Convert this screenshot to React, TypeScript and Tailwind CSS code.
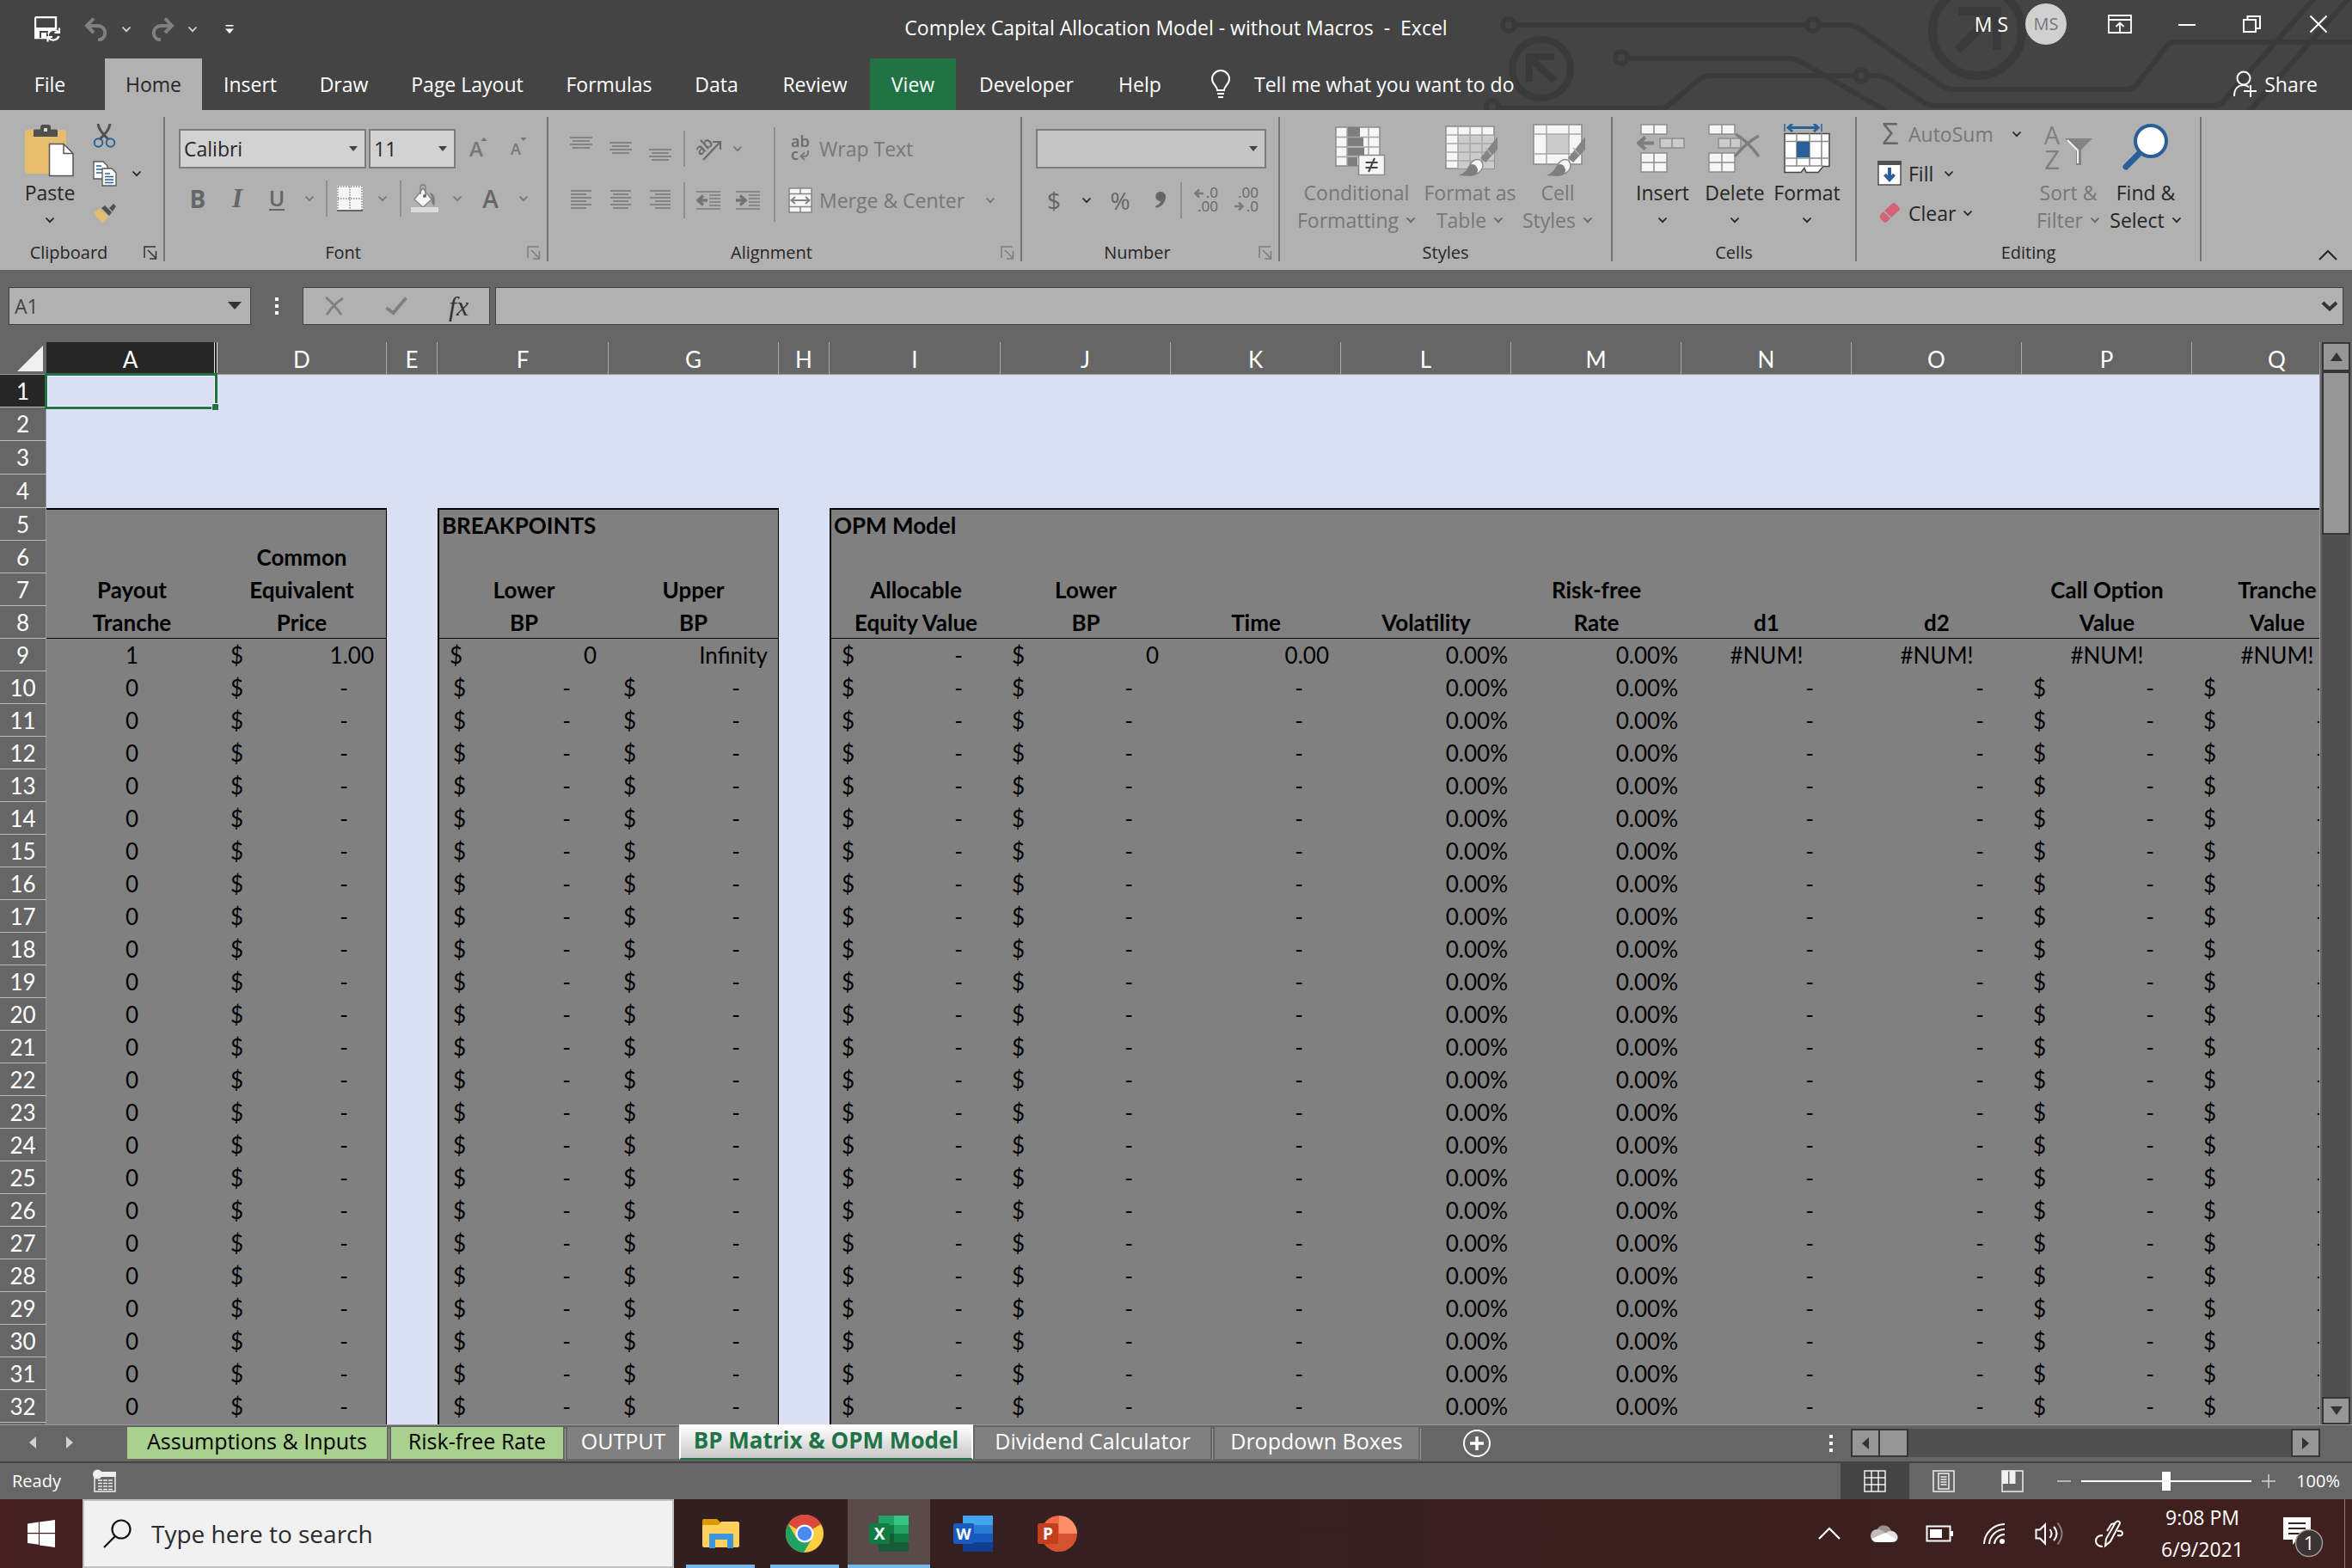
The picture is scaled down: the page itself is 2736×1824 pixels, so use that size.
import React from "react";

type Kids = { children?: React.ReactNode };

/* ---------- small shared pieces ---------- */

function Chev({ className = "text-[#262626]" }: { className?: string }) {
  return (
    <svg width="12" height="8" viewBox="0 0 12 8" className={`shrink-0 ${className}`} aria-hidden="true">
      <path d="M1.5 1.5L6 6.2l4.5-4.7" fill="none" stroke="currentColor" strokeWidth="1.8" />
    </svg>
  );
}

function Tri({ className = "" }: { className?: string }) {
  return (
    <svg width="10" height="6" viewBox="0 0 10 6" className={className} aria-hidden="true">
      <path d="M0 0h10L5 6z" fill="currentColor" />
    </svg>
  );
}

function Slot({ w, label, children }: Kids & { w: string; label: string }) {
  return (
    <button type="button" aria-label={label} className={`flex h-[42px] shrink-0 items-center justify-center ${w}`}>
      {children}
    </button>
  );
}

function Sep({ className = "h-[42px]" }: { className?: string }) {
  return <span className={`w-[2px] shrink-0 bg-[#8f8f8f] ${className}`} />;
}

function Group({ name, launcher, w, children }: Kids & { name: string; launcher?: "on" | "off"; w: string }) {
  return (
    <section aria-label={name} className={`flex shrink-0 flex-col border-r-2 border-[#757575] ${w}`}>
      <div className="flex-1">{children}</div>
      <div className="flex h-5 items-center">
        <span className="flex-1 text-center text-[20px] leading-5 text-[#262626]">{name}</span>
        {launcher && (
          <button type="button" aria-label={`${name} settings`} className="flex w-[30px] justify-center">
            <svg
              width="16"
              height="16"
              viewBox="0 0 16 16"
              fill="none"
              stroke="currentColor"
              strokeWidth="1.5"
              className={launcher === "on" ? "text-[#333]" : "text-[#7d7d7d]"}
            >
              <path d="M1 14V1h13M5 5l9 9M14.500 6v9H7" />
            </svg>
          </button>
        )}
      </div>
    </section>
  );
}

function BigButton({
  icon,
  top,
  bottom,
  dim,
  w,
}: {
  icon: React.ReactNode;
  top: string;
  bottom?: string;
  dim?: boolean;
  w: string;
}) {
  return (
    <button
      type="button"
      className={`flex shrink-0 flex-col items-center text-[23px] leading-8 whitespace-nowrap ${w} ${dim ? "text-[#777]" : "text-[#262626]"}`}
    >
      <span className="flex h-16 items-start justify-center">{icon}</span>
      <span>{top}</span>
      <span className="flex h-8 items-center gap-2">
        {bottom && <span>{bottom}</span>}
        <Chev className={dim ? "text-[#666]" : "text-[#262626]"} />
      </span>
    </button>
  );
}

function Combo({ label, value, w, bg }: { label: string; value: string; w: string; bg: string }) {
  return (
    <span className={`relative block shrink-0 ${w}`}>
      <select
        aria-label={label}
        defaultValue={value}
        className={`h-[46px] w-full appearance-none rounded-none border-2 border-[#7c7c7c] pl-1 text-[23px] text-[#262626] ${bg}`}
      >
        <option>{value}</option>
      </select>
      <Tri className="pointer-events-none absolute top-5 right-2.5 text-[#444]" />
    </span>
  );
}

function Lines({ rows, w = 26 }: { rows: [number, number, number][]; w?: number }) {
  return (
    <svg width={w} height="28" viewBox={`0 0 ${w} 28`} stroke="#7b7b7b" strokeWidth="1.6" aria-hidden="true">
      {rows.map(([y, a, b]) => (
        <path key={y} d={`M${a} ${y}H${b}`} />
      ))}
    </svg>
  );
}

/* ---------- title bar ---------- */

function Circuit() {
  return (
    <svg
      className="pointer-events-none absolute top-0 right-0"
      width="1036"
      height="128"
      viewBox="1700 0 1036 128"
      fill="none"
      stroke="#3a3a3a"
      strokeWidth="6"
      aria-hidden="true"
    >
      <circle cx="1755" cy="29" r="7" />
      <path d="M1764 29H2100M2118 29H2150C2158 29 2164 34 2170 38L2256 98Q2264 104 2274 104H2472Q2482 104 2486 98L2520 54Q2524 49 2532 49H2736" />
      <circle cx="2109" cy="29" r="7" />
      <circle cx="1886" cy="67" r="7" />
      <path d="M1895 68H2080Q2090 68 2104 77L2194 129" />
      <circle cx="1736" cy="124" r="7" />
      <path d="M1745 126H1930Q1938 126 1944 120L1972 96Q1980 88 1990 88H2156" />
      <circle cx="2165" cy="88" r="7" />
      <path d="M2174 88H2182Q2192 88 2202 95L2236 118Q2242 123 2252 123H2574Q2584 123 2588 116L2694 -4" />
      <path d="M2616 130L2734 -4" />
      <circle cx="1793" cy="80" r="34" strokeWidth="8" />
      <path d="M1808 66H1779V95M1780 67L1808 94" strokeWidth="8" />
      <circle cx="2300" cy="36" r="52" strokeWidth="10" />
      <path d="M2278 13H2323V58M2322 14L2277 58" strokeWidth="10" />
    </svg>
  );
}

function TitleBar() {
  return (
    <div className="relative flex h-[68px] items-center justify-between text-white">
      <div className="flex items-center">
        <button type="button" aria-label="Save" className="ml-10 flex w-[34px]">
          <svg width="32" height="30" viewBox="0 0 32 30" fill="none">
            <path d="M1 1h24v14M1 1v24h14" stroke="#fff" strokeWidth="2.400" />
            <path d="M1 13h24v4h-8v9H1z" fill="#fff" />
            <path d="M7 25v-7h8v7" stroke="#444" strokeWidth="2" />
            <path d="M16 20.500a7 7 0 0 1 12-2M29 13.500v5.500h-5.500M28.500 23a7 7 0 0 1-12 2M15.500 29.500v-5.500H21" stroke="#fff" strokeWidth="2.200" />
          </svg>
        </button>
        <button type="button" aria-label="Undo" className="ml-6 flex">
          <svg width="28" height="28" viewBox="0 0 28 28" fill="none" stroke="#808080" strokeWidth="4">
            <path d="M3 10h13a8 8 0 0 1 0 16.500M11 1.500L3 10l8 8" />
          </svg>
        </button>
        <button type="button" aria-label="Undo list" className="ml-[15px] flex">
          <Chev className="text-[#d5d5d5]" />
        </button>
        <button type="button" aria-label="Redo" className="ml-[22px] flex">
          <svg width="28" height="28" viewBox="0 0 28 28" fill="none" stroke="#808080" strokeWidth="4">
            <path d="M25 10H12a8 8 0 0 0 0 16.500M17 1.500L25 10l-8 8" />
          </svg>
        </button>
        <button type="button" aria-label="Redo list" className="ml-[15px] flex">
          <Chev className="text-[#d5d5d5]" />
        </button>
        <button type="button" aria-label="Customize toolbar" className="ml-8 flex">
          <svg width="10" height="12" viewBox="0 0 10 12" fill="#fff">
            <path d="M0.500 1h9v1.600h-9zM0 5.500h10L5 11z" />
          </svg>
        </button>
      </div>
      <h1 className="absolute left-1/2 -translate-x-1/2 pb-1 text-[23px] leading-8 font-normal whitespace-pre">
        {"Complex Capital Allocation Model - without Macros  -  Excel"}
      </h1>
      <div className="flex items-center pb-3">
        <span className="text-[23px] leading-8">M S</span>
        <span className="ml-5 flex size-12 items-center justify-center rounded-full bg-[#d0d0d0] text-[20px] text-[#777]">
          MS
        </span>
        <button type="button" aria-label="Ribbon display options" className="ml-12 flex">
          <svg width="28" height="22" viewBox="0 0 28 22" fill="none" stroke="#fff" strokeWidth="1.800">
            <path d="M1 1h26v20H1zM1 6h26M14 20V10M9.500 14L14 9.500l4.500 4.500" />
          </svg>
        </button>
        <button type="button" aria-label="Minimize" className="ml-[53px] flex">
          <svg width="22" height="20" viewBox="0 0 22 20" stroke="#fff" strokeWidth="2">
            <path d="M1 11h20" />
          </svg>
        </button>
        <button type="button" aria-label="Restore" className="ml-[54px] flex">
          <svg width="22" height="22" viewBox="0 0 22 22" fill="none" stroke="#fff" strokeWidth="2">
            <path d="M1 6h14v14H1zM5.500 6V2H20v14h-5" />
          </svg>
        </button>
        <button type="button" aria-label="Close" className="mr-7 ml-[55px] flex">
          <svg width="22" height="22" viewBox="0 0 22 22" fill="none" stroke="#fff" strokeWidth="2">
            <path d="M1.500 1.500l19 19M20.500 1.500l-19 19" />
          </svg>
        </button>
      </div>
    </div>
  );
}

const tabs: [string, string][] = [
  ["File", "w-[122px] pr-1.5"],
  ["Home", "w-[113px] bg-[#b1b1b1] text-[#262626]"],
  ["Insert", "w-[112px]"],
  ["Draw", "w-[106px]"],
  ["Page Layout", "w-[181px]"],
  ["Formulas", "w-[149px]"],
  ["Data", "w-[101px]"],
  ["Review", "w-[128px]"],
  ["View", "w-[100px] bg-[#217346]"],
  ["Developer", "w-[164px]"],
  ["Help", "w-[100px]"],
];

function TabBar() {
  return (
    <nav className="relative flex h-[60px] items-stretch text-[23px] text-white">
      {tabs.map(([t, c]) => (
        <button key={t} type="button" className={`shrink-0 whitespace-nowrap ${c}`}>
          {t}
        </button>
      ))}
      <button type="button" className="ml-8 flex items-center gap-[27px] whitespace-nowrap">
        <svg width="24" height="34" viewBox="0 0 24 34" fill="none" stroke="#fff" strokeWidth="2">
          <path d="M8 24c0-5-6-7-6-13a10 10 0 0 1 20 0c0 6-6 8-6 13zM8 28h8M9 32h6" />
        </svg>
        Tell me what you want to do
      </button>
      <button type="button" className="mr-10 ml-auto flex items-center gap-2">
        <svg width="28" height="32" viewBox="0 0 28 32" fill="none" stroke="#fff" strokeWidth="2">
          <circle cx="12" cy="9" r="7.500" />
          <path d="M1 30c0-8 4-13 11-13 3 0 4.500 1 6 2.500M20 17v14M12 24h15" />
        </svg>
        Share
      </button>
    </nav>
  );
}

/* ---------- ribbon icons ---------- */

const PasteIcon = (
  <svg width="58" height="62" viewBox="0 0 58 62">
    <rect x="0" y="7" width="48" height="51" rx="3" fill="#e6bd6c" />
    <path d="M10 15V8q0-1.500 2-1.500h6V4q0-3 3-3h6q3 0 3 3v2.500h6q2 0 2 1.500v7z" fill="#4f4f4f" />
    <rect x="22" y="5" width="4" height="4" fill="#d8d8d8" />
    <path d="M28.500 23.500H45l11 11v26H28.500z" fill="#fff" stroke="#555" strokeWidth="1.500" />
    <path d="M45 23.500v11h11" fill="none" stroke="#555" strokeWidth="1.500" />
  </svg>
);

const CondIcon = (
  <svg width="68" height="60" viewBox="-9 0 68 60">
    <path d="M1 4h51v45H1z" fill="#f6f6f6" stroke="#8a8a8a" strokeWidth="1.500" />
    <path d="M14 4h15v11H14zM14 16h19v10H14zM14 27.500h20v10H14zM14 39h12v10H14z" fill="#7e7e7e" />
    <path d="M1 15.500h51M1 27h51M1 38.500h51M14 4v45M39 4v45" stroke="#a5a5a5" strokeWidth="1.500" />
    <path d="M27.500 36.500h30v23h-30z" fill="#f6f6f6" stroke="#888" strokeWidth="1.500" />
    <path d="M35.500 45h14M35.500 51h14M46 40l-7 16" stroke="#444" strokeWidth="2" />
  </svg>
);

function Brush() {
  return (
    <>
      <path d="M61 15v15L47 45l-6-5z" fill="#848484" />
      <path d="M47 28l7 8" stroke="#b1b1b1" strokeWidth="1.500" />
      <path d="M30 46q6-7 12-3 5 7-2 13-6 5-13 3z" fill="#f6f6f6" stroke="#8a8a8a" strokeWidth="1.500" />
      <path d="M16 60q8-3 11-10 3-5 8-2 5 5 2 9-2 4-9 4z" fill="#7e7e7e" />
    </>
  );
}

const TableFmtIcon = (
  <svg width="66" height="62" viewBox="-4 0 66 62">
    <path d="M1 3h56v49H1z" fill="#f6f6f6" stroke="#8a8a8a" strokeWidth="1.500" />
    <path d="M15 13h42v39H15z" fill="#cbcbcb" />
    <path d="M1 13h56M1 23h56M1 33h56M1 43h56M15 3v49M29 3v49M43 3v49" stroke="#a8a8a8" strokeWidth="1.500" />
    <Brush />
  </svg>
);

const CellStyleIcon = (
  <svg width="66" height="62" viewBox="-4 0 66 62">
    <path d="M1 1h56v46H1z" fill="#f6f6f6" stroke="#8a8a8a" strokeWidth="1.500" />
    <path d="M16 12h26v23H16z" fill="#cbcbcb" />
    <path d="M1 12h56M1 35h56M16 1v46M42 1v46" stroke="#a8a8a8" strokeWidth="1.500" />
    <Brush />
  </svg>
);

const InsertIcon = (
  <svg width="60" height="58" viewBox="0 0 60 58" fill="#f6f6f6" stroke="#8d8d8d" strokeWidth="1.500">
    <path d="M5 1h30v11H5zM20 1v11M5 34h30v22H5zM5 45h30M20 34v22" />
    <path d="M27 17h28v11H27zM41 17v11" fill="#cbcbcb" />
    <path d="M20 22.500H4M10 15.500l-8 7 8 7" fill="none" stroke="#7e7e7e" strokeWidth="4" />
  </svg>
);

const DeleteIcon = (
  <svg width="62" height="58" viewBox="0 0 62 58" fill="#f6f6f6" stroke="#8d8d8d" strokeWidth="1.500">
    <path d="M1 1h30v11H1zM16 1v11M1 34h30v22H1zM1 45h30M16 34v22" />
    <path d="M12 17h26v11H12zM26 17v11" fill="#cbcbcb" />
    <path d="M32 12q14 8 27 26M59 14Q44 22 31 38" fill="none" stroke="#7e7e7e" strokeWidth="3.500" />
  </svg>
);

const FormatIcon = (
  <svg width="54" height="58" viewBox="0 0 54 58" fill="none">
    <path d="M1 0v9M44 0v9" stroke="#2a6099" strokeWidth="1.500" />
    <path d="M5 4.500h35M10 0L5 4.500l5 4.500M35 0l5 4.500L35 9" stroke="#2a6099" strokeWidth="3" />
    <path d="M1 11.500h52v38H46l-6 7H26l-2-5-4 5H1z" fill="#fff" stroke="#444" strokeWidth="1.500" />
    <path d="M1 20.500h52M1 40h52M15 11v38M30 11v38M44 11v38M1 49h45" stroke="#8a8a8a" strokeWidth="1.500" />
    <path d="M15 21h15v18H15z" fill="#2a6099" />
  </svg>
);

const SortIcon = (
  <svg width="58" height="60" viewBox="0 0 58 60" fill="none" className="overflow-visible">
    <text x="10" y="24" fontSize="29" fill="#808080" textAnchor="middle">
      A
    </text>
    <text x="10" y="53" fontSize="31" fill="#808080" textAnchor="middle">
      Z
    </text>
    <path d="M25 17h32L44 30v18h-6V30z" fill="#848484" />
    <path d="M28 19l12 12v15" stroke="#f4f4f4" strokeWidth="2" />
  </svg>
);

const FindIcon = (
  <svg width="56" height="56" viewBox="0 0 56 56" fill="none" stroke="#2a6099">
    <path d="M22 33L5 50" strokeWidth="7" strokeLinecap="round" />
    <circle cx="34" cy="20" r="18" fill="#fff" strokeWidth="4" />
  </svg>
);

/* ---------- ribbon ---------- */

function Ribbon() {
  return (
    <div className="flex h-[186px] shrink-0 items-stretch overflow-hidden bg-[#b1b1b1] pt-2 pb-2.5 text-[#262626]">
      <Group name="Clipboard" launcher="on" w="w-[192px]">
        <div className="flex pt-2 pl-[26px]">
          <BigButton icon={PasteIcon} top="Paste" w="w-16" />
          <div className="ml-[18px] flex flex-col">
            <button type="button" aria-label="Cut" className="flex h-[30px]">
              <svg width="28" height="28" viewBox="0 0 28 28" fill="none">
                <path d="M6 0q1 8 12 18M20 0q-1 8-12 18" stroke="#505050" strokeWidth="3" />
                <circle cx="6.500" cy="22" r="4.800" stroke="#2a6099" strokeWidth="2" />
                <circle cx="20.500" cy="22" r="4.800" stroke="#2a6099" strokeWidth="2" />
              </svg>
            </button>
            <button type="button" aria-label="Copy" className="mt-3 flex h-8 items-center gap-[17px]">
              <svg width="28" height="30" viewBox="0 0 28 30" fill="#fff">
                <path d="M1 1h11l5 5v15H1z" stroke="#555" strokeWidth="1.300" />
                <path d="M4 6h6M4 10h7M4 14h7" stroke="#2a6099" strokeWidth="1.300" />
                <path d="M11 9h11l5 5v15H11z" stroke="#555" strokeWidth="1.300" />
                <path d="M14 15h6M14 18.500h10M14 22h10M14 25.500h10" stroke="#2a6099" strokeWidth="1.300" />
              </svg>
              <Chev />
            </button>
            <button type="button" aria-label="Format painter" className="mt-[18px] flex">
              <svg width="28" height="24" viewBox="0 0 28 24">
                <path d="M8 7l10 9-6 7q-7-4-11-12z" fill="#e6bd6c" />
                <path d="M10 6l4-3 8 8-3 4zM19 6l5-5 3 3-4 6z" fill="#505050" />
              </svg>
            </button>
          </div>
        </div>
      </Group>

      <Group name="Font" launcher="off" w="w-[446px]">
        <div className="flex items-center gap-[3px] pt-3.5 pl-4">
          <Combo label="Font name" value="Calibri" w="w-[218px]" bg="bg-[#d2d2d2]" />
          <Combo label="Font size" value="11" w="w-[101px]" bg="bg-[#d2d2d2]" />
          <Slot w="w-12" label="Grow font">
            <span className="flex items-start text-[24px] leading-7 font-semibold text-[#777]">
              A<Tri className="-ml-1 rotate-180 scale-75" />
            </span>
          </Slot>
          <Slot w="w-10" label="Shrink font">
            <span className="flex items-start text-[18px] leading-7 font-semibold text-[#777]">
              A<Tri className="-ml-0.5 scale-75" />
            </span>
          </Slot>
        </div>
        <div className="flex items-center pt-3.5 pl-[15px] text-[#666]">
          <Slot w="w-[46px]" label="Bold">
            <span className="text-[28px] font-bold">B</span>
          </Slot>
          <Slot w="w-[46px]" label="Italic">
            <span className="font-['Liberation_Serif',serif] text-[31px] font-bold italic">I</span>
          </Slot>
          <Slot w="w-[46px]" label="Underline">
            <span className="border-b-2 border-[#666] text-[25px] leading-[26px] font-semibold">U</span>
          </Slot>
          <Slot w="w-[30px]" label="Underline styles">
            <Chev className="text-[#777]" />
          </Slot>
          <Sep className="ml-1 h-[42px]" />
          <Slot w="w-[52px]" label="Borders">
            <svg width="30" height="30" viewBox="0 0 30 30">
              <path d="M0 0h30v30H0z" fill="#f6f6f6" />
              <path d="M1 1h28v28M1 1v28M15 1v28M1 15h28" fill="none" stroke="#888" strokeWidth="1.500" strokeDasharray="1.500 1.500" />
              <path d="M0 29h30" stroke="#666" strokeWidth="2" />
            </svg>
          </Slot>
          <Slot w="w-[24px]" label="Border styles">
            <Chev className="text-[#777]" />
          </Slot>
          <Sep className="ml-2 h-[42px]" />
          <Slot w="w-[53px]" label="Fill color">
            <svg width="32" height="34" viewBox="0 0 32 34" fill="none">
              <path d="M22 10q8 2 5 16-4-4-3-10z" fill="#7e7e7e" />
              <path d="M14 5l10 13-10 9L4 18z" fill="#f6f6f6" stroke="#8a8a8a" strokeWidth="1.500" />
              <path d="M11 12V3q0-2 3-2t3 3v10" stroke="#8a8a8a" strokeWidth="1.800" />
              <circle cx="16" cy="14" r="2" fill="#666" />
              <path d="M0 27h32v6H0z" fill="#dcdcdc" />
            </svg>
          </Slot>
          <Slot w="w-[24px]" label="Fill colors">
            <Chev className="text-[#777]" />
          </Slot>
          <Slot w="w-[53px]" label="Font color">
            <span className="text-[28px] font-semibold">A</span>
          </Slot>
          <Slot w="w-[24px]" label="Font colors">
            <Chev className="text-[#777]" />
          </Slot>
        </div>
      </Group>

      <Group name="Alignment" launcher="off" w="w-[551px]">
        <div className="flex pl-[15px]">
          <div>
            <div className="flex items-center pt-4">
              <Slot w="w-[46px]" label="Top align">
                <Lines rows={[[1, 0, 26], [5, 3, 23], [9, 0, 26], [13, 3, 23]]} />
              </Slot>
              <Slot w="w-[46px]" label="Middle align">
                <Lines rows={[[7, 0, 26], [11, 3, 23], [15, 0, 26], [19, 3, 23]]} />
              </Slot>
              <Slot w="w-[46px]" label="Bottom align">
                <Lines rows={[[15, 0, 26], [19, 3, 23], [23, 0, 26], [27, 3, 23]]} />
              </Slot>
              <Sep className="ml-1 h-[42px]" />
              <Slot w="w-[54px]" label="Orientation">
                <svg width="32" height="32" viewBox="0 0 32 32" fill="none" className="overflow-visible">
                  <text x="2" y="21" transform="rotate(-42 9 17)" fontSize="18" fontWeight="600" fill="#6a6a6a">
                    ab
                  </text>
                  <path d="M10 29L29 9M21 8h9v9" stroke="#6a6a6a" strokeWidth="2.200" />
                </svg>
              </Slot>
              <Slot w="w-[14px]" label="Orientation list">
                <Chev className="text-[#777]" />
              </Slot>
            </div>
            <div className="flex items-center pt-[18px]">
              <Slot w="w-[46px]" label="Align left">
                <Lines rows={[[3, 1, 25], [7, 1, 19], [11, 1, 25], [15, 1, 19], [19, 1, 25], [23, 1, 19]]} />
              </Slot>
              <Slot w="w-[46px]" label="Center">
                <Lines rows={[[3, 1, 25], [7, 4, 22], [11, 1, 25], [15, 4, 22], [19, 1, 25], [23, 4, 22]]} />
              </Slot>
              <Slot w="w-[46px]" label="Align right">
                <Lines rows={[[3, 1, 25], [7, 7, 25], [11, 1, 25], [15, 7, 25], [19, 1, 25], [23, 7, 25]]} />
              </Slot>
              <Sep className="ml-1 h-[42px]" />
              <Slot w="w-[54px]" label="Decrease indent">
                <svg width="28" height="22" viewBox="0 0 28 22" fill="none">
                  <path d="M0 1h28M15 5h13M15 9h13M15 13h13M15 17h13M0 21h28" stroke="#7b7b7b" strokeWidth="1.500" />
                  <path d="M13 11H3M8 5.500l-6 5.500 6 5.500" stroke="#747474" strokeWidth="3.500" />
                </svg>
              </Slot>
              <Slot w="w-[38px]" label="Increase indent">
                <svg width="28" height="22" viewBox="0 0 28 22" fill="none">
                  <path d="M0 1h28M15 5h13M15 9h13M15 13h13M15 17h13M0 21h28" stroke="#7b7b7b" strokeWidth="1.500" />
                  <path d="M0 11h10M5 5.500l6 5.500-6 5.500" stroke="#747474" strokeWidth="3.500" />
                </svg>
              </Slot>
            </div>
          </div>
          <Sep className="mt-3 ml-[11px] h-[110px]" />
          <div className="pl-[15px] text-[23px] text-[#777]">
            <button type="button" className="mt-4 flex h-[42px] items-center gap-2">
              <svg width="28" height="30" viewBox="0 0 28 30" fill="none" className="overflow-visible">
                <text x="3" y="13" fontSize="18" fontWeight="600" fill="#6a6a6a">
                  ab
                </text>
                <text x="3" y="28" fontSize="18" fontWeight="600" fill="#6a6a6a">
                  c
                </text>
                <path d="M23 17v3q0 4-6 4h-2M19 19.500L14.500 24l4.500 4" stroke="#7a7a7a" strokeWidth="2" />
              </svg>
              Wrap Text
            </button>
            <button type="button" className="mt-[18px] flex h-[42px] items-center gap-2 whitespace-nowrap">
              <svg width="28" height="30" viewBox="0 0 28 30" fill="#f6f6f6" stroke="#858585" strokeWidth="1.500">
                <path d="M1 1h26v28H1zM1 7.500h26M1 22.500h26M14 1v6M14 23v6" />
                <path d="M4 15h20M8 11l-4.500 4L8 19M20 11l4.500 4-4.500 4" fill="none" strokeWidth="2" />
              </svg>
              <span className="mr-4">Merge &amp; Center</span>
              <Chev className="text-[#777]" />
            </button>
          </div>
        </div>
      </Group>

      <Group name="Number" launcher="off" w="w-[300px]">
        <div className="pt-3.5 pl-4">
          <Combo label="Number format" value="" w="w-[268px]" bg="bg-[#c5c5c5]" />
        </div>
        <div className="flex items-center pt-4 pl-3.5 text-[#666]">
          <Slot w="w-[46px]" label="Accounting format">
            <span className="text-[28px]">$</span>
          </Slot>
          <Slot w="w-[30px]" label="Accounting formats">
            <Chev />
          </Slot>
          <Slot w="w-[48px]" label="Percent style">
            <span className="text-[28px]">%</span>
          </Slot>
          <Slot w="w-[46px]" label="Comma style">
            <svg width="14" height="20" viewBox="0 0 14 20">
              <path d="M6.500 0a6 6 0 0 1 6.500 7Q12 16 2 19l-1-2q6-3 6-6A5.500 5.500 0 0 1 6.500 0z" fill="#666" />
            </svg>
          </Slot>
          <Sep />
          <Slot w="w-[56px]" label="Increase decimal">
            <svg width="30" height="32" viewBox="0 0 30 32" fill="#666" className="overflow-visible">
              <text x="29" y="13" fontSize="17" textAnchor="end">.0</text>
              <text x="29" y="29" fontSize="17" textAnchor="end">.00</text>
              <path d="M12 8H3M7 3.500L2.500 8 7 12.500" fill="none" stroke="#7a7a7a" strokeWidth="2.600" />
            </svg>
          </Slot>
          <Slot w="w-[38px]" label="Decrease decimal">
            <svg width="30" height="32" viewBox="0 0 30 32" fill="#666" className="overflow-visible">
              <text x="29" y="13" fontSize="17" textAnchor="end">.00</text>
              <text x="29" y="29" fontSize="17" textAnchor="end">.0</text>
              <path d="M1 23h9M6 18.500l4.500 4.500L6 27.500" fill="none" stroke="#7a7a7a" strokeWidth="2.600" />
            </svg>
          </Slot>
        </div>
      </Group>

      <Group name="Styles" w="w-[387px]">
        <div className="flex pt-2 pl-4">
          <BigButton icon={CondIcon} top="Conditional" bottom="Formatting" dim w="w-[146px]" />
          <BigButton icon={TableFmtIcon} top="Format as" bottom="Table" dim w="w-[118px]" />
          <BigButton icon={CellStyleIcon} top="Cell" bottom="Styles" dim w="w-[86px]" />
        </div>
      </Group>

      <Group name="Cells" w="w-[284px]">
        <div className="flex pt-2 pl-4">
          <BigButton icon={InsertIcon} top="Insert" w="w-[84px]" />
          <BigButton icon={DeleteIcon} top="Delete" w="w-[84px]" />
          <BigButton icon={FormatIcon} top="Format" w="w-[84px]" />
        </div>
      </Group>

      <Group name="Editing" w="w-[401px]">
        <div className="flex pl-6">
          <div className="flex w-[180px] flex-col gap-3.5 pt-1 text-[23px] leading-8">
            <button type="button" className="flex h-8 items-center text-[#777]">
              <svg width="36" height="28" viewBox="0 0 36 28" className="overflow-visible">
                <text x="15" y="26" fontSize="34" textAnchor="middle" fill="#666">
                  Σ
                </text>
              </svg>
              AutoSum
              <span className="ml-auto pr-3">
                <Chev />
              </span>
            </button>
            <button type="button" className="flex h-8 items-center gap-2">
              <svg width="28" height="30" viewBox="0 0 28 30">
                <path d="M1 1h26v27H1z" fill="#fff" stroke="#505050" strokeWidth="1.500" />
                <path d="M0 0h28v5H0z" fill="#505050" />
                <path d="M14 8v15M8.500 16l5.500 6 5.500-6" fill="none" stroke="#2a6099" strokeWidth="4" />
              </svg>
              Fill
              <Chev className="ml-1 text-[#262626]" />
            </button>
            <button type="button" className="flex h-8 items-center gap-2">
              <svg width="28" height="24" viewBox="0 0 28 24">
                <path d="M17 1q2-2 4 0l4 4q2 2 0 4l-9 8-8-8z" fill="#d4637a" />
                <path d="M7 10l8 8-4 4q-2 2-4 0l-4-4q-1-2 1-5z" fill="#d4637a" />
              </svg>
              Clear
              <Chev />
            </button>
          </div>
          <span className="flex gap-1.5 pt-2">
            <BigButton icon={SortIcon} top="Sort &amp;" bottom="Filter" dim w="w-[84px]" />
            <BigButton icon={FindIcon} top="Find &amp;" bottom="Select" w="w-[84px]" />
          </span>
        </div>
      </Group>
      <button type="button" aria-label="Collapse the ribbon" className="mr-4 ml-auto flex self-end">
        <svg width="24" height="14" viewBox="0 0 24 14" fill="none" stroke="#262626" strokeWidth="2">
          <path d="M2 12L12 2l10 10" />
        </svg>
      </button>
    </div>
  );
}

/* ---------- formula bar ---------- */

function Dots() {
  return (
    <span className="flex flex-col gap-1">
      <i className="size-1 bg-white" />
      <i className="size-1 bg-white" />
      <i className="size-1 bg-white" />
    </span>
  );
}

function FormulaBar() {
  return (
    <div className="flex h-[84px] shrink-0 items-center bg-[#666] px-2.5">
      <span className="relative block w-[282px]">
        <input
          aria-label="Name box"
          defaultValue="A1"
          className="h-[44px] w-full border border-[#444] bg-[#b1b1b1] pl-1.5 text-[23px] text-[#444]"
        />
        <svg width="16" height="9" viewBox="0 0 16 9" className="pointer-events-none absolute top-[17px] right-[11px]">
          <path d="M0 0h16L8 9z" fill="#333" />
        </svg>
      </span>
      <span className="flex w-[60px] justify-center">
        <Dots />
      </span>
      <div className="flex h-[44px] w-[218px] items-center justify-around border border-[#444] bg-[#b1b1b1]">
        <button type="button" aria-label="Cancel">
          <svg width="24" height="22" viewBox="0 0 24 22" fill="none" stroke="#808080" strokeWidth="2.800">
            <path d="M2 1q8 6 18 20M22 2Q12 8 3 21" />
          </svg>
        </button>
        <button type="button" aria-label="Enter">
          <svg width="26" height="22" viewBox="0 0 26 22" fill="none" stroke="#808080" strokeWidth="4">
            <path d="M1.500 13l8 6L24.500 1.500" />
          </svg>
        </button>
        <button
          type="button"
          aria-label="Insert function"
          className="font-['Liberation_Serif',serif] text-[32px] leading-9 text-[#333] italic"
        >
          fx
        </button>
      </div>
      <span className="relative ml-1.5 block flex-1">
        <input aria-label="Formula" className="block h-[44px] w-full border border-[#444] bg-[#b1b1b1] px-2 text-[23px]" />
        <svg
          width="20"
          height="12"
          viewBox="0 0 20 12"
          className="pointer-events-none absolute top-4 right-1.5"
          fill="none"
          stroke="#333"
          strokeWidth="4"
        >
          <path d="M2 2l8 7.500L18 2" />
        </svg>
      </span>
    </div>
  );
}

/* ---------- sheet ---------- */

type Col = { id: string; w: string; kind: "rank" | "money" | "dash" | "pct" | "gap"; pad?: string; edge?: string };

const cols: Col[] = [
  { id: "A", w: "w-[199px]", kind: "rank" },
  { id: "D", w: "w-[197px]", kind: "money", pad: "pl-[15px]", edge: "border-r" },
  { id: "E", w: "w-[59px]", kind: "gap" },
  { id: "F", w: "w-[199px]", kind: "money", pad: "pl-4", edge: "border-l-2" },
  { id: "G", w: "w-[198px]", kind: "money", pad: "pl-[17px]", edge: "border-r" },
  { id: "H", w: "w-[59px]", kind: "gap" },
  { id: "I", w: "w-[199px]", kind: "money", pad: "pl-3", edge: "border-l-2" },
  { id: "J", w: "w-[198px]", kind: "money", pad: "pl-[13px]" },
  { id: "K", w: "w-[198px]", kind: "dash" },
  { id: "L", w: "w-[198px]", kind: "pct" },
  { id: "M", w: "w-[198px]", kind: "pct" },
  { id: "N", w: "w-[198px]", kind: "dash" },
  { id: "O", w: "w-[198px]", kind: "dash" },
  { id: "P", w: "w-[198px]", kind: "money", pad: "pl-[13px]" },
  { id: "Q", w: "w-[198px]", kind: "money", pad: "pl-[13px]" },
];

const heads: Record<number, Record<string, string>> = {
  5: { F: "BREAKPOINTS", I: "OPM Model" },
  6: { D: "Common" },
  7: {
    A: "Payout", D: "Equivalent", F: "Lower", G: "Upper", I: "Allocable", J: "Lower",
    M: "Risk-free", P: "Call Option", Q: "Tranche",
  },
  8: {
    A: "Tranche", D: "Price", F: "BP", G: "BP", I: "Equity Value", J: "BP", K: "Time",
    L: "Volatility", M: "Rate", N: "d1", O: "d2", P: "Value", Q: "Value",
  },
};

function Money({ pad, value, end = "pr-3.5" }: { pad?: string; value: string; end?: string }) {
  return (
    <span className={`flex justify-between ${pad ?? ""} ${end}`}>
      <span>$</span>
      <span>{value}</span>
    </span>
  );
}

function body(c: Col, row: number): React.ReactNode {
  if (c.kind === "gap") return null;
  if (row === 9) {
    switch (c.id) {
      case "A":
        return "1";
      case "D":
        return <Money pad="pl-[15px]" value="1.00" />;
      case "F":
        return <Money pad="pl-3" value="0" />;
      case "G":
        return <span className="block pr-3 text-right">Infinity</span>;
      case "J":
        return <Money pad="pl-[13px]" value="0" />;
      case "K":
        return <span className="block pr-3.5 text-right">0.00</span>;
      case "N":
      case "O":
      case "P":
      case "Q":
        return "#NUM!";
    }
  }
  if (c.kind === "rank") return "0";
  if (c.kind === "pct") return <span className="block pr-1 text-right">0.00%</span>;
  if (c.kind === "dash") return <span className="block pr-11 text-right">-</span>;
  return <Money pad={c.pad} value="-" end="pr-11" />;
}

const rowNumbers = Array.from({ length: 33 }, (_, i) => i + 1);

function Sheet() {
  return (
    <div className="min-w-0 flex-1 overflow-hidden border-r border-[#999] bg-[#808080]">
      <table className="w-[2748px] table-fixed border-separate border-spacing-0 font-['Lato',sans-serif] text-[26px] leading-[36px] text-black">
        <colgroup>
          <col className="w-[54px]" />
          {cols.map((c) => (
            <col key={c.id} className={c.w} />
          ))}
        </colgroup>
        <thead>
          <tr className="h-[38px] bg-[#666] text-white">
            <th className="border-b border-[#999] p-0">
              <svg width="30" height="30" viewBox="0 0 30 30" className="ml-5" aria-label="Select all">
                <path d="M30 0v30H0z" fill="#f0f0f0" />
              </svg>
            </th>
            {cols.map((c) => (
              <th
                key={c.id}
                scope="col"
                className={`h-[38px] border-b border-[#999] p-0 pt-0.5 leading-8 font-normal ${
                  c.id === "A" ? "border-r-4 border-double border-r-[#e5e5e5] bg-[#262626]" : "border-r border-r-[#aaa]"
                }`}
              >
                {c.id}
              </th>
            ))}
          </tr>
        </thead>
        <tbody>
          {rowNumbers.map((r) => (
            <tr key={r} className={r >= 2 && r <= 4 ? "h-[39px]" : "h-[38px]"}>
              <th
                scope="row"
                className={`border-r border-b border-r-[#999] border-b-[#bbb] p-0 font-normal text-white ${
                  r === 1 ? "bg-[#262626]" : "bg-[#666]"
                }`}
              >
                {r}
              </th>
              {cols.map((c) => {
                if (r < 5 || c.kind === "gap") {
                  return (
                    <td key={c.id} className="relative bg-[#dae0f3] p-0">
                      {r === 1 && c.id === "A" && (
                        <span className="absolute -top-0.5 right-0 -bottom-0.5 -left-0.5 z-10 border-[3px] border-[#217346] shadow-[inset_0_0_0_1px_#fff]">
                          <i className="absolute -right-1 -bottom-1 size-2 border-t border-l border-white bg-[#217346]" />
                        </span>
                      )}
                    </td>
                  );
                }
                const edge = c.edge ?? "";
                if (r < 9) {
                  const text = heads[r][c.id] ?? "";
                  return (
                    <td
                      key={c.id}
                      className={`border-black bg-[#808080] p-0 font-bold whitespace-nowrap ${edge} ${
                        r === 5 ? "border-t-2 pl-[3px] text-left" : "text-center"
                      } ${r === 8 ? "border-b" : ""}`}
                    >
                      {text}
                    </td>
                  );
                }
                return (
                  <td key={c.id} className={`border-black bg-[#808080] p-0 text-center ${edge}`}>
                    {body(c, r)}
                  </td>
                );
              })}
            </tr>
          ))}
        </tbody>
      </table>
    </div>
  );
}

const arrowPaths = {
  up: "M8 3l7 10H1z",
  down: "M8 13l7-10H1z",
  left: "M4 8l8-7v14z",
  right: "M12 8L4 1v14z",
};

function Arrow({ dir, label, className }: { dir: keyof typeof arrowPaths; label: string; className: string }) {
  return (
    <button type="button" aria-label={label} className={`flex shrink-0 items-center justify-center ${className}`}>
      <svg width="16" height="16" viewBox="0 0 16 16" fill="currentColor">
        <path d={arrowPaths[dir]} />
      </svg>
    </button>
  );
}

function VScroll() {
  return (
    <div className="flex w-[37px] shrink-0 flex-col bg-[#666] pr-0.5 pl-0.5">
      <Arrow dir="up" label="Scroll up" className="h-[34px] border-2 border-[#363636] bg-[#969696] text-[#333]" />
      <div className="flex flex-1 flex-col bg-[#505050]">
        <span className="h-[190px] border-2 border-[#363636] bg-[#969696]" />
      </div>
      <Arrow dir="down" label="Scroll down" className="h-[32px] border-2 border-[#363636] bg-[#969696] text-[#333]" />
    </div>
  );
}

function SheetTabs() {
  const tab = "mt-0.5 flex h-[37px] shrink-0 justify-center text-[25px] leading-8 whitespace-nowrap";
  return (
    <div className="flex h-[43px] shrink-0 items-start border-t border-[#999] bg-[#666] text-[#d0d0d0]">
      <Arrow dir="left" label="Previous sheet" className="ml-[22px] h-10 w-8" />
      <Arrow dir="right" label="Next sheet" className="ml-[11px] h-10 w-8" />
      <div className="ml-[51px] flex">
        <button type="button" className={`${tab} w-[302px] bg-[#a9d08e] text-black`}>
          Assumptions &amp; Inputs
        </button>
        <span className="mx-0.5 mt-1 h-9 w-px bg-[#999]" />
        <button type="button" className={`${tab} w-[200px] bg-[#a9d08e] text-black`}>
          Risk-free Rate
        </button>
        <span className="mx-0.5 mt-1 h-9 w-px bg-[#999]" />
        <button type="button" className={`${tab} w-[130px] bg-[#808080] text-white`}>
          OUTPUT
        </button>
        <button
          type="button"
          className="-mt-px flex h-[41px] w-[342px] shrink-0 justify-center border-2 border-white border-b-[#217346] bg-linear-to-b from-white to-[#c8c8c8] text-[26px] leading-8 font-bold whitespace-nowrap text-[#217346]"
        >
          BP Matrix &amp; OPM Model
        </button>
        <button type="button" className={`${tab} ml-0.5 w-[274px] bg-[#808080] text-white`}>
          Dividend Calculator
        </button>
        <span className="mx-0.5 mt-1 h-9 w-px bg-[#999]" />
        <button type="button" className={`${tab} w-[237px] bg-[#808080] text-white`}>
          Dropdown Boxes
        </button>
        <span className="mx-0.5 mt-1 h-9 w-px bg-[#999]" />
      </div>
      <button type="button" aria-label="New sheet" className="mt-1 ml-[46px] flex">
        <svg width="34" height="34" viewBox="0 0 34 34" fill="none" stroke="#fff">
          <circle cx="17" cy="17" r="15" strokeWidth="2" />
          <path d="M17 9v16M9 17h16" strokeWidth="3.500" />
        </svg>
      </button>
      <span className="mt-[11px] ml-auto">
        <Dots />
      </span>
      <div className="mt-1 mr-[37px] ml-[21px] flex h-[33px] w-[546px] bg-[#505050]">
        <Arrow dir="left" label="Scroll left" className="w-[34px] border-2 border-[#363636] bg-[#969696] text-[#333]" />
        <span className="w-[33px] border-2 border-l-0 border-[#363636] bg-[#969696]" />
        <Arrow
          dir="right"
          label="Scroll right"
          className="ml-auto w-[34px] border-2 border-[#363636] bg-[#969696] text-[#333]"
        />
      </div>
    </div>
  );
}

function StatusBar() {
  return (
    <div className="flex h-[44px] shrink-0 items-center border-t-2 border-[#444] bg-[#666] text-[20px] text-white">
      <span className="w-[96px] pl-3.5">Ready</span>
      <button type="button" aria-label="Macro recording" className="ml-3 flex">
        <svg width="28" height="28" viewBox="0 0 28 28" fill="none">
          <path d="M2 4h24v22H2z" stroke="#f0f0f0" strokeWidth="1.500" />
          <path d="M8 3h19v6H8z" fill="#f0f0f0" />
          <circle cx="5.500" cy="6" r="5.500" fill="#f0f0f0" />
          <path d="M6 13h17M6 16.500h17M6 20h17M6 23.500h17" stroke="#f0f0f0" strokeWidth="1.500" strokeDasharray="5 1" />
        </svg>
      </button>
      <div className="ml-auto flex h-full items-center">
        <button type="button" aria-label="Normal view" className="flex h-full w-20 items-center justify-center bg-[#444]">
          <svg width="26" height="26" viewBox="0 0 26 26" fill="none" stroke="#f0f0f0" strokeWidth="1.500">
            <path d="M1 1h24v24H1zM9 1v24M17 1v24M1 9h24M1 17h24" />
          </svg>
        </button>
        <button type="button" aria-label="Page layout view" className="flex w-20 justify-center">
          <svg width="26" height="26" viewBox="0 0 26 26" fill="none" stroke="#f0f0f0" strokeWidth="1.500">
            <path d="M1 1h24v24H1zM7 4h12v18H7zM9.500 8h7M9.500 11h7M9.500 14h7M9.500 17h7" />
          </svg>
        </button>
        <button type="button" aria-label="Page break preview" className="flex w-20 justify-center">
          <svg width="26" height="26" viewBox="0 0 26 26" fill="none">
            <path d="M1 1h24v24H1z" stroke="#f0f0f0" strokeWidth="1.500" />
            <path d="M1 1h7v15H1zM9.500 1h7v15h-7z" fill="#f0f0f0" />
          </svg>
        </button>
        <button type="button" aria-label="Zoom out" className="ml-3 flex">
          <svg width="16" height="16" viewBox="0 0 16 16" stroke="#d0d0d0" strokeWidth="1.500">
            <path d="M0 8h16" />
          </svg>
        </button>
        <input
          type="range"
          aria-label="Zoom"
          min={0}
          max={100}
          defaultValue={50}
          className="mx-3 h-6 w-[198px] appearance-none bg-transparent [&::-webkit-slider-runnable-track]:h-[2px] [&::-webkit-slider-runnable-track]:bg-white [&::-webkit-slider-thumb]:-mt-[10px] [&::-webkit-slider-thumb]:h-[22px] [&::-webkit-slider-thumb]:w-[10px] [&::-webkit-slider-thumb]:appearance-none [&::-webkit-slider-thumb]:bg-white"
        />
        <button type="button" aria-label="Zoom in" className="flex">
          <svg width="16" height="16" viewBox="0 0 16 16" stroke="#d0d0d0" strokeWidth="1.500">
            <path d="M0 8h16M8 0v16" />
          </svg>
        </button>
        <span className="w-[89px] pr-3.5 text-right">100%</span>
      </div>
    </div>
  );
}

/* ---------- taskbar ---------- */

function TaskButton({ label, active, open, children }: Kids & { label: string; active?: boolean; open?: boolean }) {
  return (
    <button
      type="button"
      aria-label={label}
      className={`relative flex h-full w-24 items-center justify-center ${active ? "bg-[#5b4a4a]" : ""}`}
    >
      {children}
      {open && <i className={`absolute bottom-0 h-1 bg-[#76b9ed] ${active ? "inset-x-0" : "inset-x-2"}`} />}
    </button>
  );
}

function Taskbar() {
  return (
    <footer className="flex h-[80px] shrink-0 bg-linear-to-r from-[#45201f] via-[#331f20] via-30% to-[#40201f] text-white">
      <button type="button" aria-label="Start" className="flex w-24 items-center justify-center">
        <svg width="32" height="32" viewBox="0 0 32 32" fill="#fff">
          <path d="M0 4.500L13 2.600V15H0zM14 2.400L32 0v15H14zM0 16.300h13v12.500L0 27zM14 16.300h18V32l-18-2.600z" />
        </svg>
      </button>
      <label className="flex w-[688px] items-center border-2 border-[#c0c0c0] bg-[#f1f1f1] pl-[22px]">
        <svg width="34" height="34" viewBox="0 0 34 34" fill="none" stroke="#111" strokeWidth="2.200">
          <circle cx="21" cy="12" r="10.500" />
          <path d="M14 20L1 33" />
        </svg>
        <input
          aria-label="Search"
          placeholder="Type here to search"
          className="ml-[22px] flex-1 bg-transparent text-[28px] outline-none placeholder:text-[#2b2b2b]"
        />
      </label>
      <div className="ml-1.5 flex gap-0.5">
        <TaskButton label="File Explorer" open>
          <svg width="44" height="36" viewBox="0 0 44 36">
            <path d="M1 3q0-2 2-2h15l4 4v5H1z" fill="#dd9a00" />
            <path d="M1 8h19l3-4h19q2 0 2 2v26q0 2-2 2H3q-2 0-2-2z" fill="#ffd15c" />
            <path d="M9 19q0-1 1-1h26q1 0 1 1v16h-7V25H16v10H9z" fill="#3a96dd" />
          </svg>
        </TaskButton>
        <TaskButton label="Chrome" open>
          <svg width="46" height="46" viewBox="0 0 46 46">
            <circle cx="23" cy="23" r="22" fill="#ffcd40" />
            <path d="M23 23L4 12A22 22 0 0 1 42.100 12z" fill="#dc4a3e" />
            <path d="M23 12h19.100a22 22 0 0 0-38.100 0z" fill="#dc4a3e" />
            <path d="M4 12a22 22 0 0 0 18 33l9.500-16.500L13.500 28z" fill="#1fa261" />
            <circle cx="23" cy="23" r="10.500" fill="#fff" />
            <circle cx="23" cy="23" r="8.300" fill="#4a8af4" />
          </svg>
        </TaskButton>
        <TaskButton label="Excel" open active>
          <svg width="48" height="44" viewBox="0 0 48 44">
            <path d="M12 1h18v11H12z" fill="#21a366" />
            <path d="M30 1h17v11H30z" fill="#33c481" />
            <path d="M12 12h18v10H12z" fill="#107c41" />
            <path d="M30 12h17v10H30z" fill="#21a366" />
            <path d="M12 22h35v21H12z" fill="#185c37" />
            <path d="M30 22h17v10H30z" fill="#107c41" />
            <rect x="1" y="10" width="24" height="24" rx="2" fill="#107c41" />
            <text x="13" y="29" fontSize="19" fontWeight="700" fill="#fff" textAnchor="middle">
              X
            </text>
          </svg>
        </TaskButton>
        <TaskButton label="Word">
          <svg width="48" height="44" viewBox="0 0 48 44">
            <path d="M12 1h35v11H12z" fill="#41a5ee" />
            <path d="M12 12h35v10H12z" fill="#2b7cd3" />
            <path d="M12 22h35v10H12z" fill="#185abd" />
            <path d="M12 32h35v11H12z" fill="#103f91" />
            <rect x="1" y="10" width="24" height="24" rx="2" fill="#185abd" />
            <text x="13" y="29" fontSize="18" fontWeight="700" fill="#fff" textAnchor="middle">
              W
            </text>
          </svg>
        </TaskButton>
        <TaskButton label="PowerPoint">
          <svg width="48" height="44" viewBox="0 0 48 44">
            <path d="M26 1a21 21 0 0 0 0 42z" fill="#ed6c47" />
            <path d="M26 1a21 21 0 0 1 21 21H26z" fill="#ff8f6b" />
            <path d="M5 22h42a21 21 0 0 1-42 0z" fill="#d35230" />
            <rect x="1" y="10" width="24" height="24" rx="2" fill="#c43e1c" />
            <text x="13" y="29" fontSize="19" fontWeight="700" fill="#fff" textAnchor="middle">
              P
            </text>
          </svg>
        </TaskButton>
      </div>
      <div className="ml-auto flex items-center">
        <button type="button" aria-label="Hidden icons" className="flex w-16 justify-center">
          <svg width="28" height="16" viewBox="0 0 28 16" fill="none" stroke="#fff" strokeWidth="2.200">
            <path d="M2 14L14 2l12 12" />
          </svg>
        </button>
        <button type="button" aria-label="OneDrive" className="flex w-16 justify-center">
          <svg width="34" height="24" viewBox="0 0 34 24">
            <path d="M8 8a9 9 0 0 1 17 1l-1 8H10z" fill="#988f8f" />
            <path d="M8 22a7.500 7.500 0 0 1 1-15q6 0 9 5l6 4-8 6z" fill="#c4bdbd" />
            <path d="M18 12q6-6 12-1 4 4 2 8l-14-4z" fill="#e4dfdf" />
            <path d="M2 18l16-7 14 8q-2 3-6 3H8q-4 0-6-4z" fill="#fff" />
          </svg>
        </button>
        <button type="button" aria-label="Battery" className="flex w-16 justify-center">
          <svg width="32" height="20" viewBox="0 0 32 20" fill="none">
            <path d="M1.500 1.500h27v17h-27z" stroke="#fff" strokeWidth="2" />
            <path d="M5 5h14v10H5zM29 7h3v6h-3z" fill="#fff" />
          </svg>
        </button>
        <button type="button" aria-label="Network" className="flex w-16 justify-center">
          <svg width="26" height="26" viewBox="0 0 26 26" fill="none" stroke="#fff" strokeWidth="2">
            <path d="M1 25A24 24 0 0 1 25 2M7 25A18 18 0 0 1 25 8M13 25a12 12 0 0 1 12-11" />
            <circle cx="22" cy="22" r="3" fill="#fff" stroke="none" />
          </svg>
        </button>
        <button type="button" aria-label="Volume" className="flex w-16 justify-center">
          <svg width="34" height="28" viewBox="0 0 34 28" fill="none" stroke="#fff" strokeWidth="2">
            <path d="M1.500 9.500h4.500l6-6v22l-6-6H1.500zM17.500 9q4 5 0 10M22 6q7 8 0 16" />
            <path d="M26.500 1.500q10 12.500 0 25" stroke="#8d7b7b" />
          </svg>
        </button>
        <button type="button" aria-label="Windows Ink" className="flex w-[76px] justify-center">
          <svg width="34" height="34" viewBox="0 0 34 34" fill="none" stroke="#fff" strokeWidth="2">
            <path d="M12 31l1-8L24 4q3-3 5 0 0 2-1 3L18 26zM14 14l5-8 4-1M9 19q-8 0-8 7 1 6 8 6M26 14q6-1 6 3 0 3-6 2" />
          </svg>
        </button>
        <div className="w-[140px] text-center text-[23px] leading-[37px] whitespace-nowrap">
          <div>9:08 PM</div>
          <div>6/9/2021</div>
        </div>
        <button type="button" aria-label="Notifications" className="relative ml-[23px] flex">
          <svg width="48" height="56" viewBox="0 0 48 56">
            <path d="M1 9h32v26H17l-5 6v-6H1z" fill="#fff" />
            <path d="M7 16h20M7 22h20M7 28h14" stroke="#3a2020" strokeWidth="2" />
            <circle cx="31" cy="39" r="15.500" fill="#3a3434" stroke="#a39b9b" strokeWidth="1.500" />
            <text x="31" y="47" fontSize="22" fill="#fff" textAnchor="middle">
              1
            </text>
          </svg>
        </button>
        <span className="mr-2 ml-6 h-[80px] w-px bg-[#8d7b7b]" />
      </div>
    </footer>
  );
}

export default function App() {
  return (
    <div className="flex h-screen flex-col overflow-hidden bg-[#666] font-['Open_Sans','Noto_Sans',sans-serif]">
      <header className="relative shrink-0 overflow-hidden bg-[#444]">
        <Circuit />
        <TitleBar />
        <TabBar />
      </header>
      <Ribbon />
      <FormulaBar />
      <main className="flex min-h-0 flex-1">
        <Sheet />
        <VScroll />
      </main>
      <SheetTabs />
      <StatusBar />
      <Taskbar />
    </div>
  );
}
